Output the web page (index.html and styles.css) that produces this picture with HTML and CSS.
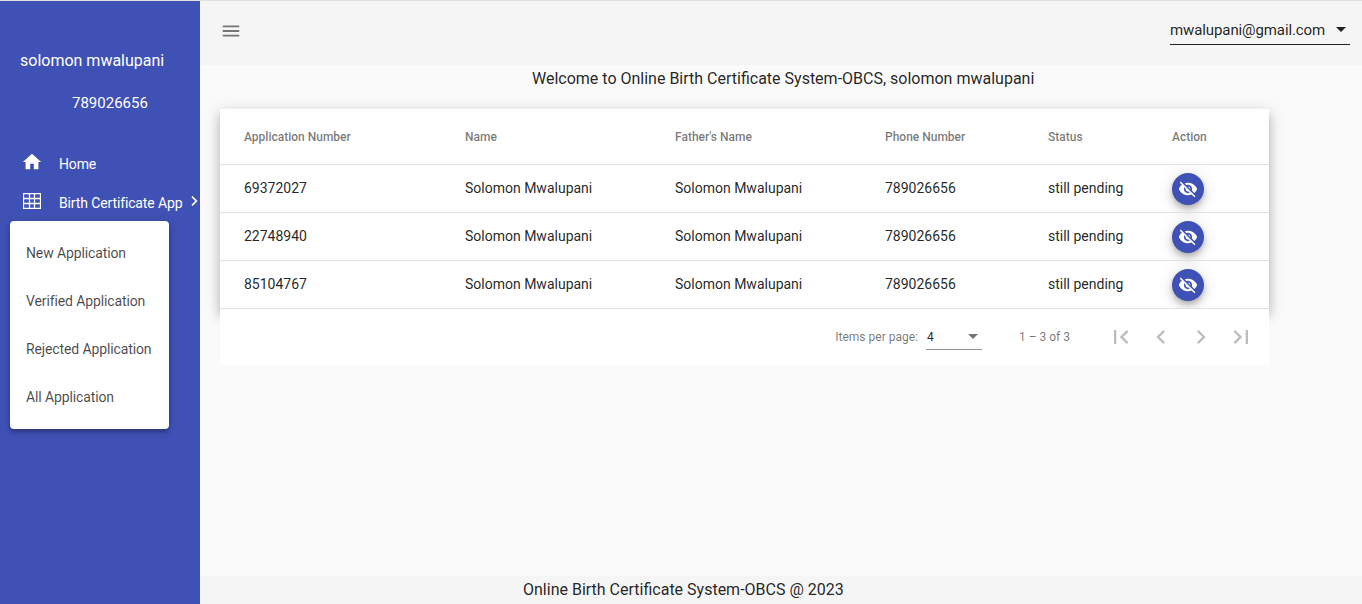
FILE: index.html
```html
<!DOCTYPE html>
<html lang="en">
<head>
<meta charset="utf-8">
<title>Online Birth Certificate System</title>
<link rel="stylesheet" href="styles.css">
</head>
<body>
<div class="app">
  <aside class="sidebar">
    <div class="user-name">solomon mwalupani</div>
    <div class="user-phone">789026656</div>
    <nav class="nav">
      <a class="nav-item">
        <svg class="nav-icon home-icon" viewBox="0 0 24 24"><path d="M10 20v-6h4v6h5v-8h3L12 3 2 12h3v8z"/></svg>
        <span>Home</span>
      </a>
      <a class="nav-item">
        <svg class="nav-icon grid-icon" viewBox="0 0 18 16"><path d="M.5 .5h17v15H.5zM.5 5.500h17M.5 10.500h17M6.500 .5v15M11.500 .5v15"/></svg>
        <span>Birth Certificate App</span>
        <svg class="nav-chevron" viewBox="8.590 6 7.410 12"><path d="M10 6L8.590 7.410 13.170 12l-4.580 4.590L10 18l6-6z"/></svg>
      </a>
    </nav>
    <div class="flyout">
      <a class="flyout-item">New Application</a>
      <a class="flyout-item">Verified Application</a>
      <a class="flyout-item">Rejected Application</a>
      <a class="flyout-item">All Application</a>
    </div>
  </aside>
  <main class="main">
    <header class="toolbar">
      <svg class="menu-icon" viewBox="0 0 24 24"><path d="M3 18h18v-2H3v2zm0-5h18v-2H3v2zm0-7v2h18V6H3z"/></svg>
      <div class="account">
        <span>mwalupani@gmail.com</span>
        <span class="account-arrow"></span>
      </div>
    </header>
    <p class="welcome">Welcome to Online Birth Certificate System-OBCS, solomon mwalupani</p>
    <section class="card">
      <table class="table">
        <colgroup>
          <col class="c1"><col class="c2"><col class="c3"><col class="c4"><col class="c5"><col class="c6">
        </colgroup>
        <thead>
          <tr><th>Application Number</th><th>Name</th><th>Father's Name</th><th>Phone Number</th><th>Status</th><th>Action</th></tr>
        </thead>
        <tbody>
          <tr>
            <td>69372027</td><td>Solomon Mwalupani</td><td>Solomon Mwalupani</td><td>789026656</td><td>still pending</td>
            <td><button class="fab"><svg viewBox="0 0 24 24"><path d="M12 7c2.760 0 5 2.240 5 5 0 .65-.13 1.260-.36 1.830l2.920 2.920c1.510-1.260 2.700-2.890 3.430-4.750-1.730-4.390-6-7.500-11-7.500-1.400 0-2.740.25-3.980.7l2.160 2.160C10.740 7.130 11.350 7 12 7zM2 4.270l2.280 2.280.46.46C3.080 8.300 1.780 10.020 1 12c1.730 4.390 6 7.500 11 7.500 1.550 0 3.030-.3 4.380-.84l.42.42L19.730 22 21 20.730 3.270 3 2 4.270zM7.530 9.800l1.550 1.550c-.05.21-.08.43-.08.65 0 1.660 1.340 3 3 3 .22 0 .44-.03.65-.08l1.550 1.550c-.67.33-1.410.53-2.200.53-2.760 0-5-2.240-5-5 0-.79.2-1.530.53-2.200zm4.310-.78l3.150 3.150.02-.16c0-1.660-1.340-3-3-3l-.17.01z"/></svg></button></td>
          </tr>
          <tr>
            <td>22748940</td><td>Solomon Mwalupani</td><td>Solomon Mwalupani</td><td>789026656</td><td>still pending</td>
            <td><button class="fab"><svg viewBox="0 0 24 24"><path d="M12 7c2.760 0 5 2.240 5 5 0 .65-.13 1.260-.36 1.830l2.920 2.920c1.510-1.260 2.700-2.890 3.430-4.750-1.730-4.390-6-7.500-11-7.500-1.400 0-2.740.25-3.980.7l2.160 2.160C10.740 7.130 11.350 7 12 7zM2 4.270l2.280 2.280.46.46C3.080 8.300 1.780 10.020 1 12c1.730 4.390 6 7.500 11 7.500 1.550 0 3.030-.3 4.380-.84l.42.42L19.730 22 21 20.730 3.270 3 2 4.270zM7.530 9.800l1.550 1.550c-.05.21-.08.43-.08.65 0 1.660 1.340 3 3 3 .22 0 .44-.03.65-.08l1.550 1.550c-.67.33-1.410.53-2.200.53-2.760 0-5-2.240-5-5 0-.79.2-1.530.53-2.200zm4.310-.78l3.150 3.150.02-.16c0-1.660-1.340-3-3-3l-.17.01z"/></svg></button></td>
          </tr>
          <tr>
            <td>85104767</td><td>Solomon Mwalupani</td><td>Solomon Mwalupani</td><td>789026656</td><td>still pending</td>
            <td><button class="fab"><svg viewBox="0 0 24 24"><path d="M12 7c2.760 0 5 2.240 5 5 0 .65-.13 1.260-.36 1.830l2.920 2.920c1.510-1.260 2.700-2.890 3.430-4.750-1.730-4.390-6-7.500-11-7.500-1.400 0-2.740.25-3.980.7l2.160 2.160C10.740 7.130 11.350 7 12 7zM2 4.270l2.280 2.280.46.46C3.080 8.300 1.780 10.020 1 12c1.730 4.390 6 7.500 11 7.500 1.550 0 3.030-.3 4.380-.84l.42.42L19.730 22 21 20.730 3.270 3 2 4.270zM7.530 9.800l1.550 1.550c-.05.21-.08.43-.08.65 0 1.660 1.340 3 3 3 .22 0 .44-.03.65-.08l1.550 1.550c-.67.33-1.410.53-2.200.53-2.760 0-5-2.240-5-5 0-.79.2-1.530.53-2.200zm4.310-.78l3.150 3.150.02-.16c0-1.660-1.340-3-3-3l-.17.01z"/></svg></button></td>
          </tr>
        </tbody>
      </table>
      <div class="paginator">
        <span class="per-page-label">Items per page:</span>
        <div class="per-page-select"><span>4</span><span class="select-arrow"></span></div>
        <span class="range">1 – 3 of 3</span>
        <div class="pager">
          <svg viewBox="0 0 24 24"><path d="M18.410 16.590L13.820 12l4.590-4.590L17 6l-6 6 6 6zM6 6h2v12H6z"/></svg>
          <svg viewBox="0 0 24 24"><path d="M15.410 7.410L14 6l-6 6 6 6 1.410-1.410L10.830 12z"/></svg>
          <svg viewBox="0 0 24 24"><path d="M10 6L8.590 7.410 13.170 12l-4.580 4.590L10 18l6-6z"/></svg>
          <svg viewBox="0 0 24 24"><path d="M5.590 7.410L10.180 12l-4.590 4.590L7 18l6-6-6-6zM16 6h2v12h-2z"/></svg>
        </div>
      </div>
    </section>
    <footer class="footer">Online Birth Certificate System-OBCS @ 2023</footer>
  </main>
</div>
</body>
</html>
```
FILE: styles.css
```css
* { box-sizing: border-box; }
html, body { height: 100%; }
body {
  margin: 0;
  background: #fafafa;
  font-family: Roboto, "Helvetica Neue", sans-serif;
  color: rgba(0, 0, 0, 0.87);
  overflow: hidden;
}
.app {
  display: flex;
  height: 100%;
  border-top: 1px solid #e0e0e0;
}
.sidebar {
  position: relative;
  flex: 0 0 200px;
  background: #3f51b5;
  color: #fff;
}
.user-name {
  margin: 50px 0 0 20px;
  font-size: 16px;
  line-height: 19px;
}
.user-phone {
  margin: 24px 0 0 72px;
  font-size: 15px;
  line-height: 19px;
}
.nav {
  display: flex;
  flex-direction: column;
  margin-top: 31px;
}
.nav-item {
  display: flex;
  align-items: center;
  height: 39px;
  font-size: 14px;
  letter-spacing: -0.13px;
  white-space: nowrap;
}
.nav-icon {
  flex: none;
  margin-bottom: 3px;
}
.home-icon {
  width: 22px;
  height: 22px;
  margin-left: 21px;
  margin-right: 16px;
  fill: #fff;
}
.grid-icon {
  width: 18px;
  height: 16px;
  margin-left: 23px;
  margin-right: 18px;
  fill: none;
  stroke: #fff;
  stroke-width: 1.3;
}
.nav-chevron {
  flex: none;
  width: 7px;
  height: 10px;
  margin-left: 9px;
  margin-bottom: 3px;
  fill: #fff;
}
.flyout {
  position: absolute;
  left: 10px;
  top: 220px;
  width: 159px;
  padding: 8px 0;
  background: #fff;
  border-radius: 4px;
  box-shadow: 0 2px 4px -1px rgba(0,0,0,.2), 0 4px 5px rgba(0,0,0,.14), 0 1px 10px rgba(0,0,0,.12);
}
.flyout-item {
  display: flex;
  align-items: center;
  height: 48px;
  padding-left: 16px;
  font-size: 14px;
  letter-spacing: -0.12px;
  color: rgba(0, 0, 0, 0.72);
}
.main {
  flex: 1;
  min-width: 0;
  display: flex;
  flex-direction: column;
}
.toolbar {
  flex: none;
  display: flex;
  align-items: center;
  justify-content: space-between;
  height: 64px;
  padding: 0 12px 4px 20px;
  background: #f5f5f5;
}
.menu-icon {
  width: 22px;
  height: 22px;
  fill: #757575;
}
.account {
  display: flex;
  align-items: center;
  justify-content: space-between;
  width: 180px;
  height: 30px;
  margin-bottom: 2px;
  border-bottom: 1px solid rgba(0, 0, 0, 0.87);
  font-size: 15px;
  letter-spacing: -0.1px;
  padding-right: 4px;
}
.account-arrow {
  width: 0;
  height: 0;
  border-left: 5px solid transparent;
  border-right: 5px solid transparent;
  border-top: 5px solid rgba(0, 0, 0, 0.87);
}
.welcome {
  flex: none;
  margin: 0;
  height: 44px;
  padding: 4px 0 0 332px;
  font-size: 16px;
  line-height: 19px;
}
.card {
  flex: none;
  width: 1049px;
  margin-left: 20px;
  background: #fff;
}
.table {
  width: 100%;
  border-collapse: collapse;
  table-layout: fixed;
  background: #fff;
  box-shadow: 0 5px 5px -3px rgba(0,0,0,.2), 0 8px 10px 1px rgba(0,0,0,.14), 0 3px 14px 2px rgba(0,0,0,.12);
}
.c1 { width: 245px; }
.c2, .c3 { width: 210px; }
.c4 { width: 163px; }
.c5 { width: 124px; }
.c6 { width: 97px; }
th {
  height: 55px;
  padding: 2px 0 0;
  text-align: left;
  font-size: 12px;
  font-weight: 500;
  color: rgba(0, 0, 0, 0.54);
  border-bottom: 1px solid #e0e0e0;
}
td {
  height: 48px;
  padding: 0;
  font-size: 14px;
  border-bottom: 1px solid #e0e0e0;
}
th:first-child, td:first-child { padding-left: 24px; }
.fab {
  display: flex;
  align-items: center;
  justify-content: center;
  width: 32px;
  height: 32px;
  margin-top: 2px;
  padding: 0;
  border: 0;
  border-radius: 50%;
  background: #3f51b5;
  box-shadow: 0 3px 5px -1px rgba(0,0,0,.2), 0 6px 10px rgba(0,0,0,.14), 0 1px 18px rgba(0,0,0,.12);
}
.fab svg {
  width: 20px;
  height: 20px;
  fill: #fff;
}
.paginator {
  position: relative;
  display: flex;
  align-items: center;
  justify-content: flex-end;
  height: 56px;
  background: #fff;
  font-size: 12px;
  color: rgba(0, 0, 0, 0.54);
}
.per-page-label { margin-right: 8px; }
.per-page-select {
  display: flex;
  align-items: center;
  justify-content: space-between;
  width: 56px;
  height: 26px;
  margin-top: 1px;
  padding: 0 4px 0 1px;
  border-bottom: 1px solid rgba(0, 0, 0, 0.42);
  color: rgba(0, 0, 0, 0.87);
}
.select-arrow {
  width: 0;
  height: 0;
  border-left: 5px solid transparent;
  border-right: 5px solid transparent;
  border-top: 5px solid rgba(0, 0, 0, 0.54);
}
.range { margin: 0 37px; }
.pager {
  display: flex;
  gap: 12px;
  margin-right: 14px;
}
.pager svg {
  width: 28px;
  height: 28px;
  fill: rgba(0, 0, 0, 0.26);
}
.footer {
  flex: none;
  margin-top: auto;
  height: 28px;
  padding-left: 323px;
  background: #f5f5f5;
  font-size: 16px;
  line-height: 28px;
}
```
